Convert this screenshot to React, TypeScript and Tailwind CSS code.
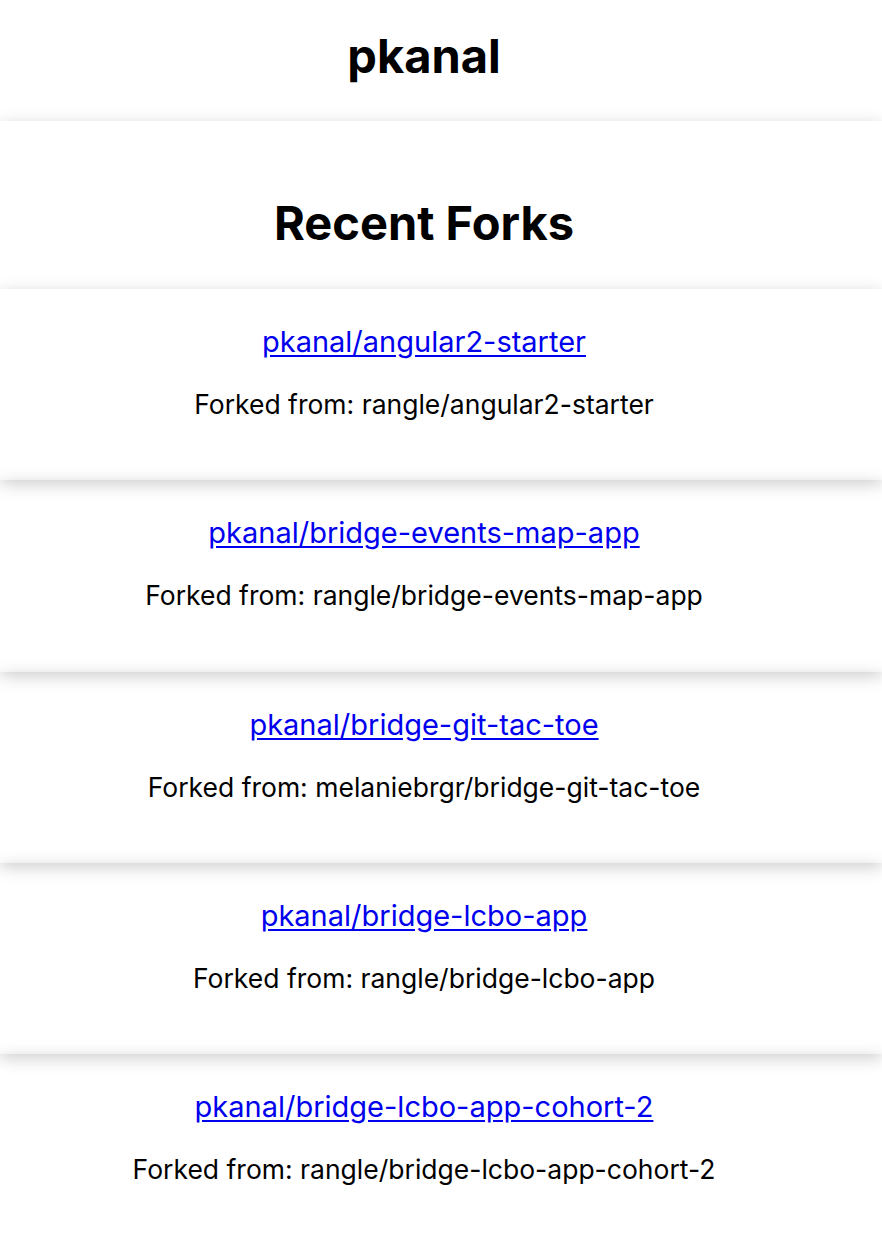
import React from 'react';

type Fork = { name: string; parent: string };

const forks: Fork[] = [
  { name: 'pkanal/angular2-starter', parent: 'rangle/angular2-starter' },
  { name: 'pkanal/bridge-events-map-app', parent: 'rangle/bridge-events-map-app' },
  { name: 'pkanal/bridge-git-tac-toe', parent: 'melaniebrgr/bridge-git-tac-toe' },
  { name: 'pkanal/bridge-lcbo-app', parent: 'rangle/bridge-lcbo-app' },
  { name: 'pkanal/bridge-lcbo-app-cohort-2', parent: 'rangle/bridge-lcbo-app-cohort-2' },
];

const ForkCard: React.FC<{ fork: Fork }> = ({ fork }) => (
  <li className="h-[191.25px] flex flex-col items-center pr-[34px] shadow-[0_4px_16px_rgba(0,0,0,0.2)]">
    <a href="#" className="mt-[38px] text-[29px] leading-none text-[#0000ee] underline underline-offset-[3px]">
      {fork.name}
    </a>
    <p className="mt-[35px] text-[26.5px] leading-none text-black">Forked from: {fork.parent}</p>
  </li>
);

const App: React.FC = () => {
  return (
    <div className="min-h-screen bg-white font-['Inter','Noto_Sans',sans-serif] text-black">
      <header className="h-[121px] pt-[32px] pr-[34px] text-center">
        <h1 className="text-[47px] font-bold leading-none">pkanal</h1>
      </header>

      <main className="bg-white shadow-[0_4px_16px_rgba(0,0,0,0.2)]">
        <section className="h-[168px] pt-[78px] pr-[34px] text-center">
          <h2 className="text-[47px] font-bold leading-none">Recent Forks</h2>
        </section>
        <ul>
          {forks.map((f) => (
            <ForkCard key={f.name} fork={f} />
          ))}
        </ul>
      </main>
    </div>
  );
};

export default App;
